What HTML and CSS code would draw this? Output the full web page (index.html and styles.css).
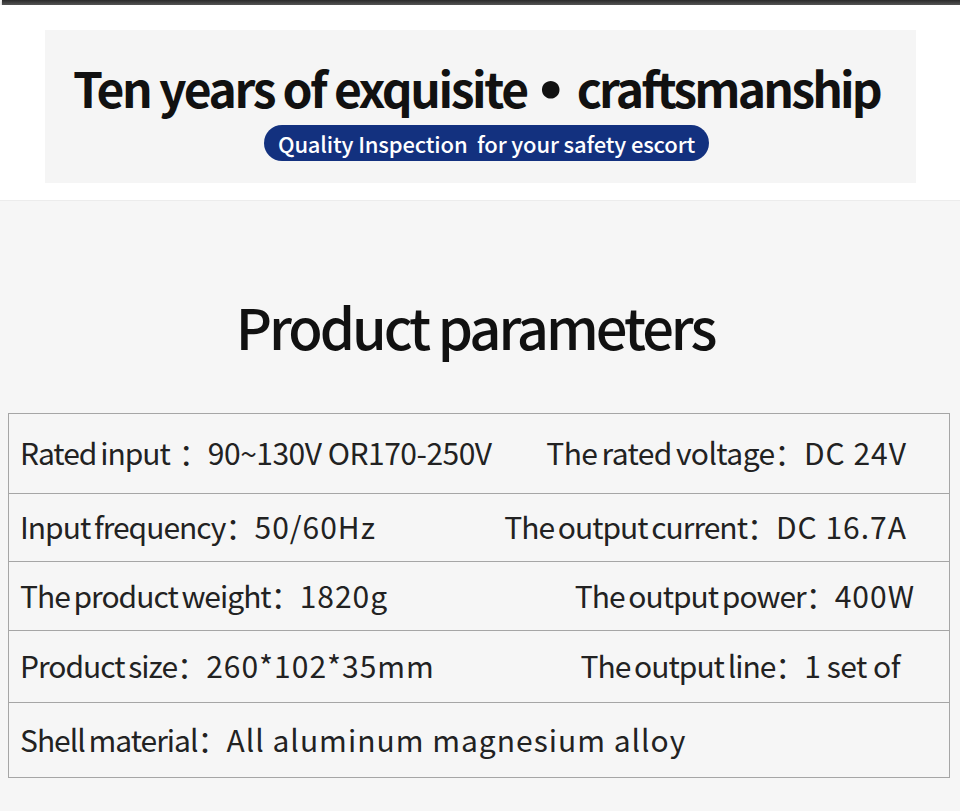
FILE: index.html
```html
<!DOCTYPE html>
<html lang="en">
<head>
<meta charset="utf-8">
<title>Product parameters</title>
<link rel="stylesheet" href="styles.css">
</head>
<body>
<div class="topbar"></div>
<section class="hero">
  <div class="hero-box">
    <h1 class="hero-title">Ten years of exquisite<span class="dot">•</span><span class="hero-word">craftsmanship</span></h1>
    <div class="pill">Quality Inspection&nbsp; for your safety escort</div>
  </div>
</section>
<section class="params">
  <h2 class="params-title">Product parameters</h2>
  <div class="spec-table">
    <div class="spec-row">
      <div class="spec-cell"><span class="label">Rated input&#8196;：</span><span class="value value--tight">90~130V OR170-250V</span></div>
      <div class="spec-cell spec-cell--wide"><span class="label">The rated voltage：</span><span class="value">DC 24V</span></div>
    </div>
    <div class="spec-row">
      <div class="spec-cell"><span class="label">Input frequency：</span><span class="value">50/60Hz</span></div>
      <div class="spec-cell"><span class="label">The output current：</span><span class="value">DC 16.7A</span></div>
    </div>
    <div class="spec-row">
      <div class="spec-cell"><span class="label">The product weight：</span><span class="value">1820g</span></div>
      <div class="spec-cell spec-cell--out"><span class="label">The output power：</span><span class="value">400W</span></div>
    </div>
    <div class="spec-row">
      <div class="spec-cell"><span class="label">Product size：</span><span class="value">260*102*35mm</span></div>
      <div class="spec-cell spec-cell--in"><span class="label">The output line：</span><span class="value value--tight">1 set of</span></div>
    </div>
    <div class="spec-row">
      <div class="spec-cell"><span class="label">Shell material：</span><span class="value">All aluminum magnesium alloy</span></div>
    </div>
  </div>
</section>
</body>
</html>
```

FILE: styles.css
```css
* { box-sizing: border-box; }
html, body {
  margin: 0;
  padding: 0;
}
body {
  background: #f6f6f6;
  font-family: "Noto Sans CJK SC", "Noto Sans", sans-serif;
  color: #1e1e1e;
  width: 960px;
  height: 811px;
  overflow: hidden;
}
.topbar {
  height: 5px;
  margin-left: 2px;
  background: linear-gradient(#2a2a2a, #555555);
  box-shadow: 0 1px 2px rgba(0,0,0,0.35);
}
.hero {
  background: #ffffff;
  padding: 25px 44px 17px 45px;
  border-bottom: 1px solid #ececec;
}
.hero-box {
  background: #f5f5f5;
  height: 153px;
  padding-top: 32px;
  display: flex;
  flex-direction: column;
  align-items: center;
}
.hero-title {
  margin: 0 0 0 -8px;
  font-size: 48px;
  line-height: 50px;
  font-weight: 700;
  letter-spacing: -2.4px;
  color: #111;
  white-space: nowrap;
}
.hero-word {
  letter-spacing: -2.8px;
}
.dot {
  font-family: "DejaVu Sans", sans-serif;
  font-size: 50px;
  letter-spacing: 0;
  margin: 0 10px 0 8px;
}
.pill {
  margin-top: 9px;
  height: 36px;
  padding: 0 14px;
  border-radius: 18px;
  background: #13317f;
  color: #fff;
  font-size: 22px;
  font-weight: 500;
  line-height: 36px;
  white-space: pre;
  margin-left: 12px;
  letter-spacing: -0.15px;
}
.params {
  padding-top: 97px;
}
.params-title {
  margin: 0;
  padding-right: 10px;
  text-align: center;
  font-size: 56px;
  line-height: 56px;
  font-weight: 500;
  letter-spacing: -3px;
  color: #111;
}
.spec-table {
  margin: 59px 10px 0 8px;
  border: 1px solid #a6a6a6;
  border-bottom: none;
  display: grid;
  grid-template-rows: 80px 68px 69px 72px 75px;
}
.spec-row {
  display: flex;
  align-items: center;
  justify-content: space-between;
  border-bottom: 1px solid #a6a6a6;
  padding: 0 42px 3px 11px;
  font-size: 30px;
  color: #222;
  white-space: pre;
}
.spec-cell--wide .label {
  letter-spacing: -0.6px;
}
.spec-cell--out {
  margin-right: -8px;
}
.spec-cell--in {
  margin-right: 7px;
}
.label {
  letter-spacing: -1px;
  word-spacing: -2px;
}
.value {
  letter-spacing: 1px;
}
.value--tight {
  letter-spacing: -0.5px;
}
```
